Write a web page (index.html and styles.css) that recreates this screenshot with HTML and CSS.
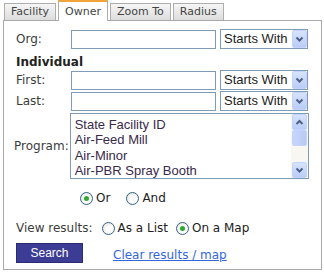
FILE: index.html
```html
<!DOCTYPE html>
<html>
<head>
<meta charset="utf-8">
<link rel="stylesheet" href="styles.css">
</head>
<body>
<div class="tabs">
  <div class="tab">Facility</div>
  <div class="tab active">Owner</div>
  <div class="tab">Zoom To</div>
  <div class="tab">Radius</div>
</div>
<div class="panel">
  <div class="row first-row">
    <label class="lbl">Org:</label>
    <div class="input"></div>
    <div class="select"><span class="val">Starts With</span><span class="arrow"><svg width="9" height="7" viewBox="0 0 9 7"><path d="M1.5 1.5 L4.5 4.5 L7.5 1.5" fill="none" stroke="#4d6185" stroke-width="2"/></svg></span></div>
  </div>
  <div class="section">Individual</div>
  <div class="row">
    <label class="lbl">First:</label>
    <div class="input"></div>
    <div class="select"><span class="val">Starts With</span><span class="arrow"><svg width="9" height="7" viewBox="0 0 9 7"><path d="M1.5 1.5 L4.5 4.5 L7.5 1.5" fill="none" stroke="#4d6185" stroke-width="2"/></svg></span></div>
  </div>
  <div class="row">
    <label class="lbl">Last:</label>
    <div class="input"></div>
    <div class="select"><span class="val">Starts With</span><span class="arrow"><svg width="9" height="7" viewBox="0 0 9 7"><path d="M1.5 1.5 L4.5 4.5 L7.5 1.5" fill="none" stroke="#4d6185" stroke-width="2"/></svg></span></div>
  </div>
  <div class="prog-row">
    <label class="lbl prog-lbl">Program:</label>
    <div class="listbox">
      <ul class="items">
        <li>State Facility ID</li>
        <li>Air-Feed Mill</li>
        <li>Air-Minor</li>
        <li>Air-PBR Spray Booth</li>
      </ul>
      <div class="scrollbar">
        <span class="sbtn"><svg width="9" height="7" viewBox="0 0 9 7"><path d="M1.5 5 L4.5 2 L7.5 5" fill="none" stroke="#4d6185" stroke-width="2"/></svg></span>
        <span class="thumb"></span>
        <span class="track"></span>
        <span class="sbtn"><svg width="9" height="7" viewBox="0 0 9 7"><path d="M1.5 1.5 L4.5 4.5 L7.5 1.5" fill="none" stroke="#4d6185" stroke-width="2"/></svg></span>
      </div>
    </div>
  </div>
  <div class="radios">
    <span class="radio checked"></span><span class="rtext">Or</span>
    <span class="radio and"></span><span class="rtext">And</span>
  </div>
  <div class="view">
    <span class="vlabel">View results:</span>
    <span class="radio"></span><span class="rtext">As a List</span>
    <span class="radio checked map"></span><span class="rtext">On a Map</span>
  </div>
  <div class="actions">
    <button class="search">Search</button>
    <a class="clear" href="#">Clear results / map</a>
  </div>
</div>
</body>
</html>
```
FILE: styles.css
```css
html, body {
  margin: 0;
  padding: 0;
  background: #fff;
}
body {
  width: 324px;
  height: 274px;
  overflow: hidden;
  font-family: "DejaVu Sans", Verdana, sans-serif;
  color: #3c3c3c;
}
.tabs {
  display: flex;
  align-items: flex-end;
  padding-left: 4px;
  height: 20px;
  gap: 2px;
}
.tab {
  box-sizing: border-box;
  height: 17px;
  padding: 0 6px;
  border: 1px solid #aeaeae;
  border-bottom: none;
  background: linear-gradient(#f6f6f6, #dcdcdc);
  font-size: 11px;
  line-height: 16px;
  color: #444;
}
.tab.active {
  height: 21px;
  margin-bottom: -1px;
  border-top: 2px solid #f2a53a;
  background: #fff;
  line-height: 19px;
  position: relative;
}
.panel {
  box-sizing: border-box;
  margin-left: 3px;
  width: 319px;
  height: 250px;
  border: 1px solid #a9a9a9;
  padding: 8px 0 0 12px;
}
.row {
  display: flex;
  align-items: center;
  height: 20px;
  margin-bottom: 1px;
}
.lbl {
  width: 55px;
  font-size: 12px;
  color: #3c3c3c;
}
.input {
  box-sizing: border-box;
  width: 145px;
  height: 19px;
  border: 1px solid #7f9db9;
  background: #fff;
}
.select {
  box-sizing: border-box;
  display: flex;
  align-items: stretch;
  margin-left: 4px;
  width: 88px;
  height: 20px;
  border: 1px solid #7f9db9;
  background: #fff;
}
.val {
  flex: 1;
  font-family: "Liberation Sans", Arial, sans-serif;
  font-size: 13px;
  line-height: 18px;
  padding-left: 3px;
  color: #222;
}
.arrow, .sbtn {
  width: 15px;
  display: flex;
  align-items: center;
  justify-content: center;
  background: linear-gradient(#d7e3fc, #b9cdf7);
  border: 1px solid #c3d3fd;
  box-sizing: border-box;
  border-radius: 2px;
}
.section {
  font-weight: bold;
  font-size: 12px;
  color: #222;
  margin-top: 5px;
  height: 16px;
  line-height: 16px;
}
.first-row { margin-bottom: 0; }
.prog-row {
  display: flex;
  align-items: center;
  margin-top: 2px;
}
.prog-lbl {
  width: auto;
  margin-left: -2px;
  margin-right: 1px;
}
.listbox {
  box-sizing: border-box;
  display: flex;
  width: 239px;
  height: 66px;
  border: 1px solid #7f9db9;
  background: #fff;
  overflow: hidden;
}
.items {
  list-style: none;
  margin: 0;
  padding: 3px 0 0 4px;
  flex: 1;
  font-family: "Liberation Sans", Arial, sans-serif;
  font-size: 13px;
  line-height: 15.3px;
  color: #3a2a4a;
}
.scrollbar {
  width: 17px;
  display: flex;
  flex-direction: column;
  background: #f8f7f1;
  padding: 0 1px;
  box-sizing: border-box;
}
.sbtn {
  height: 16px;
  width: 15px;
  flex: none;
}
.thumb {
  height: 16px;
  flex: none;
  background: linear-gradient(90deg, #c8d6fb, #b8cbf6);
  border: 1px solid #c3d3fd;
  box-sizing: border-box;
  border-radius: 2px;
}
.track { flex: 1; }
.radios {
  display: flex;
  align-items: center;
  margin-left: 64px;
  margin-top: 12px;
  height: 14px;
}
.radio {
  box-sizing: border-box;
  width: 13px;
  height: 13px;
  border-radius: 50%;
  border: 1px solid #33628c;
  background: radial-gradient(circle at 60% 60%, #fff 30%, #dcdcd4 100%);
  display: inline-flex;
  align-items: center;
  justify-content: center;
  flex: none;
}
.radio.checked::after {
  content: "";
  width: 5px;
  height: 5px;
  border-radius: 50%;
  background: #2fa82f;
}
.rtext {
  font-size: 12px;
  margin-left: 3px;
  color: #222;
}
.radio.and { margin-left: 16px; }
.view {
  display: flex;
  align-items: center;
  margin-top: 16px;
  height: 14px;
}
.vlabel {
  font-size: 12px;
  margin-right: 8px;
  color: #3c3c3c;
}
.view .radio { margin-left: 1px; }
.view .radio.map { margin-left: 8px; }
.actions {
  display: flex;
  align-items: center;
  margin-top: 8px;
}
.search {
  box-sizing: border-box;
  width: 67px;
  height: 20px;
  border: 1px solid #2a2a75;
  background: #3c3c94;
  color: #fff;
  font-family: "Liberation Sans", Arial, sans-serif;
  font-size: 12px;
  padding: 0;
}
.clear {
  margin-left: 30px;
  margin-top: 4px;
  font-size: 12px;
  color: #3366dd;
  text-decoration: underline;
}
```
